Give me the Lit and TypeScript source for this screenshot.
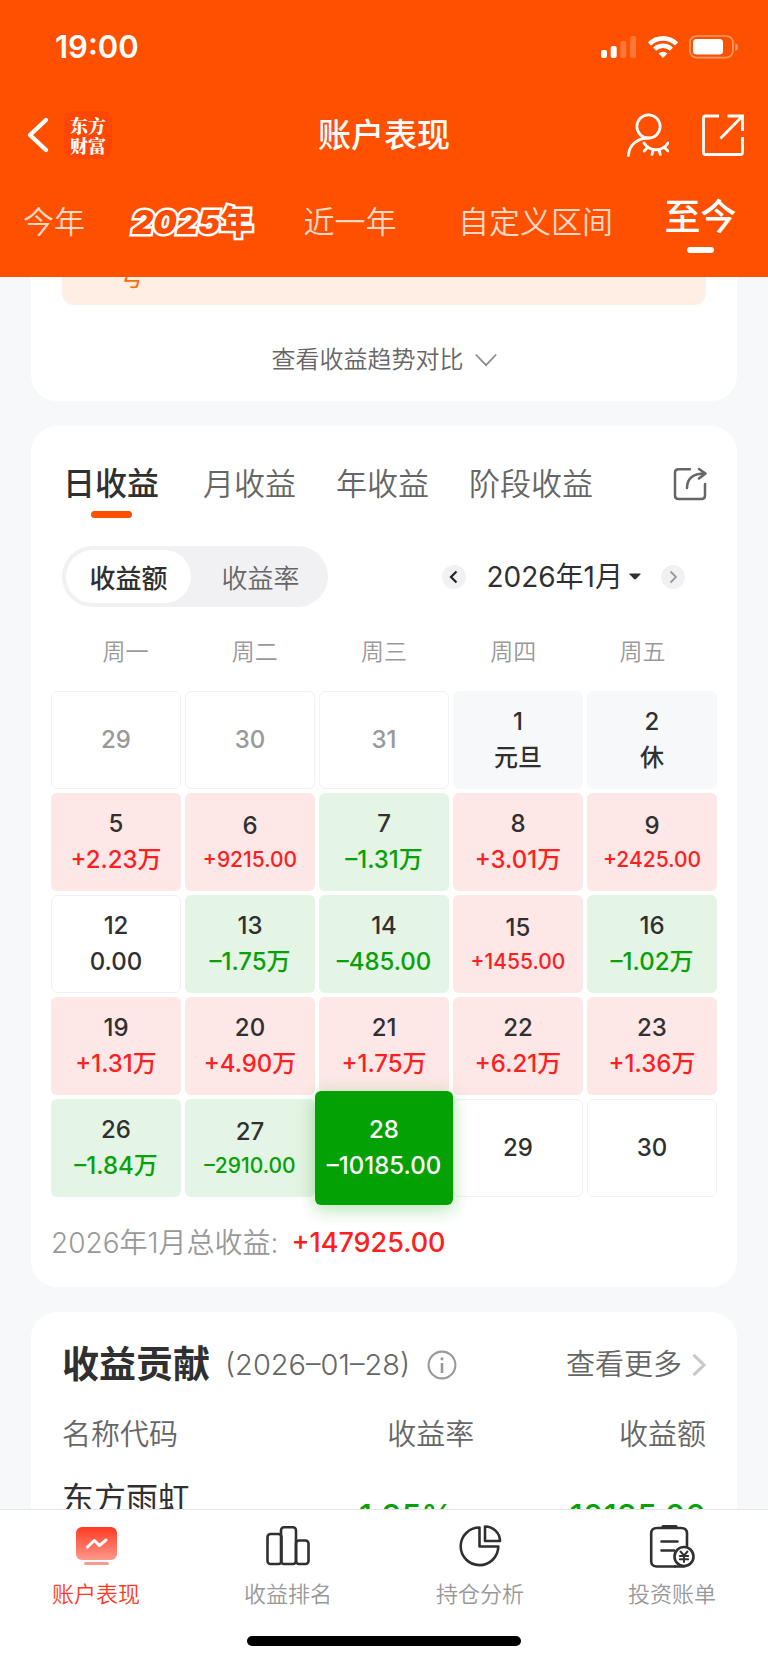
import { LitElement, html, css, svg, nothing } from "lit";
import { customElement, property, state } from "lit/decorators.js";
import { classMap } from "lit/directives/class-map.js";

type Tone = "up" | "down" | "flat" | "rest" | "outside";

interface Day {
  day: number;
  note?: string;
  tone: Tone;
  small?: boolean;
}

const DAYS: Day[] = [
  { day: 29, tone: "outside" },
  { day: 30, tone: "outside" },
  { day: 31, tone: "outside" },
  { day: 1, note: "元旦", tone: "rest" },
  { day: 2, note: "休", tone: "rest" },
  { day: 5, note: "+2.23万", tone: "up" },
  { day: 6, note: "+9215.00", tone: "up", small: true },
  { day: 7, note: "–1.31万", tone: "down" },
  { day: 8, note: "+3.01万", tone: "up" },
  { day: 9, note: "+2425.00", tone: "up", small: true },
  { day: 12, note: "0.00", tone: "flat" },
  { day: 13, note: "–1.75万", tone: "down" },
  { day: 14, note: "–485.00", tone: "down" },
  { day: 15, note: "+1455.00", tone: "up", small: true },
  { day: 16, note: "–1.02万", tone: "down" },
  { day: 19, note: "+1.31万", tone: "up" },
  { day: 20, note: "+4.90万", tone: "up" },
  { day: 21, note: "+1.75万", tone: "up" },
  { day: 22, note: "+6.21万", tone: "up" },
  { day: 23, note: "+1.36万", tone: "up" },
  { day: 26, note: "–1.84万", tone: "down" },
  { day: 27, note: "–2910.00", tone: "down", small: true },
  { day: 28, note: "–10185.00", tone: "down" },
  { day: 29, tone: "flat" },
  { day: 30, tone: "flat" },
];

const base = css`
  *,
  *::before,
  *::after {
    box-sizing: border-box;
  }
  button {
    margin: 0;
    padding: 0;
    border: 0;
    background: none;
    color: inherit;
    font: inherit;
    cursor: pointer;
  }
  a {
    color: inherit;
    text-decoration: none;
  }
  svg {
    display: block;
    flex: none;
  }
`;

@customElement("app-header")
export class AppHeader extends LitElement {
  static styles = [
    base,
    css`
      :host {
        display: block;
        flex: none;
        background: #ff5000;
        color: #fff;
      }
      .status {
        display: flex;
        align-items: center;
        height: 93px;
        padding: 0 29px 0 55px;
      }
      .time {
        flex: 1;
        font-size: 31px;
        font-weight: 600;
        line-height: 40px;
      }
      .signals {
        display: flex;
        align-items: center;
        gap: 11px;
      }
      .nav {
        display: grid;
        grid-template-columns: 1fr auto 1fr;
        align-items: center;
        height: 84px;
        padding: 0 24px;
      }
      .left,
      .right {
        display: flex;
        align-items: center;
      }
      .left {
        gap: 12px;
      }
      .right {
        justify-content: flex-end;
        gap: 33px;
      }
      .brand {
        display: grid;
        place-content: center;
        width: 48px;
        height: 48px;
        border-radius: 10px;
        background: #ff4703;
        font-family: "Noto Serif CJK SC", "Noto Sans CJK SC", sans-serif;
        font-size: 18px;
        font-weight: 900;
        line-height: 20px;
      }
      h1 {
        margin: 0;
        font-size: 33px;
        font-weight: 500;
        line-height: 44px;
      }
      .ranges {
        display: grid;
        grid-template-columns: 108fr 169fr 146fr 225fr 105fr;
        align-items: start;
        justify-items: center;
        padding: 18px 15px 24px 0;
      }
      .range {
        margin-top: 5px;
        font-size: 31px;
        font-weight: 350;
        line-height: 44px;
        color: #ffd8c6;
        white-space: nowrap;
      }
      .range.fancy {
        font-size: 33px;
        font-weight: 900;
        color: #ff4c00;
        -webkit-text-stroke: 5px #fff;
        paint-order: stroke fill;
        stroke-linejoin: round;
      }
      .fancy .digits {
        font-style: italic;
      }
      .range.active {
        display: flex;
        flex-direction: column;
        align-items: center;
        gap: 8px;
        margin-top: 0;
        font-size: 36px;
        font-weight: 500;
        color: #fff;
      }
      .range.active::after {
        content: "";
        width: 27px;
        height: 6px;
        border-radius: 3px;
        background: #fff;
      }
    `,
  ];

  render() {
    return html`
      <div class="status">
        <span class="time">19:00</span>
        <div class="signals">
          <svg width="36" height="24" viewBox="0 0 36 24" fill="#fff">
            <rect x="0" y="15" width="6" height="8" rx="2" />
            <rect x="9.7" y="11" width="6" height="12" rx="2" />
            <g opacity="0.22">
              <rect x="19.3" y="6" width="6" height="17" rx="2" />
              <rect x="29" y="1" width="6" height="22" rx="2" />
            </g>
          </svg>
          <svg width="30" height="24" viewBox="0 0 30 24" fill="none" stroke="#fff">
            <path d="M1.4 9a19.2 19.2 0 0 1 27.2 0" stroke-width="4.6" />
            <path d="M6.6 14.2a11.8 11.8 0 0 1 16.8 0" stroke-width="4.4" />
            <path d="M15 23l-4.4-4.5a6.2 6.2 0 0 1 8.8 0z" fill="#fff" stroke="none" />
          </svg>
          <svg width="50" height="24" viewBox="0 0 50 24">
            <rect x="0.9" y="1" width="43" height="21.6" rx="6.5" fill="none" stroke="#fff" stroke-opacity="0.42" stroke-width="1.7" />
            <rect x="4" y="4" width="30" height="15.6" rx="3.5" fill="#fff" />
            <path d="M46.4 8v8c3.4-1.3 3.4-6.700 0-8z" fill="#fff" opacity="0.45" />
          </svg>
        </div>
      </div>
      <div class="nav">
        <div class="left">
          <button aria-label="返回">
            <svg width="28" height="40" viewBox="0 0 28 40" fill="none" stroke="#fff" stroke-width="4.4" stroke-linecap="round" stroke-linejoin="round">
              <path d="M22 5L6 20l16 15" />
            </svg>
          </button>
          <span class="brand"><span>东方<br />财富</span></span>
        </div>
        <h1>账户表现</h1>
        <div class="right">
          <button aria-label="隐私">
            <svg width="44" height="44" viewBox="0 0 44 44" fill="none" stroke="#fff" stroke-width="2.8" stroke-linecap="round">
              <circle cx="23.5" cy="13.500" r="11.6" />
              <path d="M23.500 25C12.500 25 4 32 3.500 42.500" />
              <path d="M19 30c5.500 9 18.500 9 24 0M23 34l-3.800 4M28.200 36.300L27 41.500M34 36.300l1.200 5.200M39 34l4 4" />
            </svg>
          </button>
          <button aria-label="分享">
            <svg width="42" height="42" viewBox="0 0 42 42" fill="none" stroke="#fff" stroke-width="2.8">
              <path d="M17 2H3.500Q1.500 2 1.500 4v34.500q0 2 2 2h35q2 0 2-2V23" />
              <path d="M25.500 2h15v15M40 2.500L18.500 24.500" />
            </svg>
          </button>
        </div>
      </div>
      <nav class="ranges">
        <button class="range">今年</button>
        <button class="range fancy"><span class="digits">2025</span>年</button>
        <button class="range">近一年</button>
        <button class="range">自定义区间</button>
        <button class="range active" aria-current="true">至今</button>
      </nav>
    `;
  }
}

@customElement("day-cell")
export class DayCell extends LitElement {
  @property({ attribute: false }) data!: Day;
  @property({ type: Boolean, reflect: true }) selected = false;

  static styles = [
    base,
    css`
      :host {
        display: block;
        height: 98px;
        min-width: 0;
      }
      :host([selected]) {
        position: relative;
        z-index: 1;
        height: 114px;
        margin: -8px -4px;
      }
      .cell {
        display: flex;
        flex-direction: column;
        align-items: center;
        justify-content: center;
        width: 100%;
        height: 100%;
        border-radius: 6px;
        font-size: 24px;
        font-weight: 500;
        line-height: 36px;
        color: #303030;
        white-space: nowrap;
      }
      .flat,
      .outside {
        border: 1px solid #f1f1f3;
      }
      .outside {
        color: #999;
      }
      .rest {
        background: #f6f8fa;
      }
      .up {
        background: #fee7e7;
      }
      .down {
        background: #e4f4e5;
      }
      .up .note {
        color: #fc2020;
      }
      .down .note {
        color: #06a106;
      }
      .small {
        font-size: 21px;
        line-height: 32px;
      }
      :host([selected]) .cell {
        background: #03a103;
        box-shadow: 0 4px 18px rgba(3, 161, 3, 0.32);
        color: #fff;
      }
      :host([selected]) .note {
        color: #fff;
      }
    `,
  ];

  render() {
    const { day, note, tone, small } = this.data;
    return html`
      <button class="cell ${tone}" aria-pressed=${this.selected ? "true" : "false"}>
        <span>${day}</span>
        ${note ? html`<span class=${classMap({ note: true, small: !!small })}>${note}</span>` : nothing}
      </button>
    `;
  }
}

@customElement("profit-calendar")
export class ProfitCalendar extends LitElement {
  @state() private selected = 22;

  static styles = [
    base,
    css`
      :host {
        display: block;
        padding: 36px 20px 24px;
        border-radius: 26px;
        background: #fff;
      }
      .tabs {
        display: flex;
        align-items: flex-start;
        gap: 40px;
        padding: 0 10px 0 12px;
      }
      .tab {
        font-size: 31px;
        line-height: 44px;
        font-weight: 350;
        color: #666;
        white-space: nowrap;
      }
      .tab.active {
        display: flex;
        flex-direction: column;
        align-items: center;
        gap: 5px;
        margin-right: 4px;
        font-size: 32px;
        font-weight: 500;
        color: #303030;
      }
      .tab.active::after {
        content: "";
        width: 41px;
        height: 7px;
        border-radius: 4px;
        background: #ff5000;
      }
      .share {
        margin: 5px 0 0 auto;
      }
      .controls {
        display: flex;
        align-items: center;
        justify-content: space-between;
        margin-top: 28px;
        padding: 0 32px 0 11px;
      }
      .segmented {
        display: grid;
        grid-template-columns: 1fr 1fr;
        width: 266px;
        height: 61px;
        padding: 4px;
        border-radius: 31px;
        background: #f1f1f4;
      }
      .segment {
        border-radius: 27px;
        font-size: 26px;
        font-weight: 350;
        color: #666;
      }
      .segment.first {
        margin-right: 4px;
      }
      .segment.last {
        margin-left: 2px;
      }
      .segment.on {
        background: #fff;
        font-weight: 500;
        color: #303030;
      }
      .month {
        display: flex;
        align-items: center;
        gap: 20px;
      }
      .step {
        display: grid;
        place-items: center;
        width: 24px;
        height: 24px;
        border-radius: 12px;
        background: #f1f1f4;
      }
      .pick {
        display: flex;
        align-items: center;
        gap: 6px;
        font-size: 28px;
        font-weight: 400;
        line-height: 40px;
        color: #303030;
      }
      .week {
        display: grid;
        grid-template-columns: repeat(5, 1fr);
        margin-top: 29px;
        padding: 0 10px;
        text-align: center;
        font-size: 23px;
        font-weight: 350;
        line-height: 32px;
        color: #999;
      }
      .days {
        display: grid;
        grid-template-columns: repeat(5, 1fr);
        gap: 4px;
        margin-top: 23px;
      }
      .total {
        display: flex;
        gap: 13px;
        margin: 26px 0 0;
        font-size: 28px;
        font-weight: 350;
        line-height: 40px;
        color: #999;
      }
      .sum {
        font-size: 27px;
        font-weight: 500;
        color: #fc2020;
      }
    `,
  ];

  render() {
    return html`
      <div class="tabs">
        <button class="tab active">日收益</button>
        <button class="tab">月收益</button>
        <button class="tab">年收益</button>
        <button class="tab">阶段收益</button>
        <button class="share" aria-label="分享收益">
          <svg width="34" height="34" viewBox="0 0 34 34" fill="none" stroke="#666" stroke-width="2.500" stroke-linecap="round" stroke-linejoin="round">
            <path d="M17 2.200H5.500Q2 2.200 2 5.500V28.500Q2 32 5.500 32h23q3.500 0 3.500-3.500V17" />
            <path d="M14 21C14 12 19.500 6.500 32 6.500M26 2l6.500 4.500L26 11.500" />
          </svg>
        </button>
      </div>
      <div class="controls">
        <div class="segmented">
          <button class="segment first on" aria-pressed="true">收益额</button>
          <button class="segment last" aria-pressed="false">收益率</button>
        </div>
        <div class="month">
          <button class="step" aria-label="上个月">
            <svg width="10" height="14" viewBox="0 0 10 14" fill="none" stroke="#222" stroke-width="2.200"><path d="M7.500 1.500L2 7l5.500 5.500" /></svg>
          </button>
          <button class="pick">
            2026年1月
            <svg width="12" height="7" viewBox="0 0 12 7" fill="#303030"><path d="M.8.5h10.400q.800 0 .3.700L7 6q-1 .8-2 0L.5 1.200Q0 .5.800.5z" /></svg>
          </button>
          <button class="step" aria-label="下个月">
            <svg width="10" height="14" viewBox="0 0 10 14" fill="none" stroke="#999" stroke-width="1.800"><path d="M2.500 1.500L8 7l-5.500 5.500" /></svg>
          </button>
        </div>
      </div>
      <div class="week">
        ${["周一", "周二", "周三", "周四", "周五"].map((d) => html`<span>${d}</span>`)}
      </div>
      <div class="days">
        ${DAYS.map(
          (d, i) => html`<day-cell
            .data=${d}
            ?selected=${i === this.selected}
            @click=${() => (this.selected = i)}
          ></day-cell>`
        )}
      </div>
      <p class="total"><span>2026年1月总收益:</span><span class="sum">+147925.00</span></p>
    `;
  }
}

@customElement("profit-contribution")
export class ProfitContribution extends LitElement {
  static styles = [
    base,
    css`
      :host {
        display: block;
        padding: 31px 31px 40px;
        border-radius: 26px;
        background: #fff;
      }
      .head {
        display: flex;
        align-items: center;
        height: 44px;
        color: #666;
        font-size: 29px;
        font-weight: 350;
        line-height: 44px;
      }
      h2 {
        margin: 0;
        font-size: 37px;
        font-weight: 700;
        color: #303030;
      }
      .date {
        margin: 0 17px 0 15px;
      }
      .more {
        display: flex;
        align-items: center;
        gap: 10px;
        margin-left: auto;
      }
      table {
        width: 100%;
        margin-top: 28px;
        border-collapse: collapse;
        table-layout: fixed;
      }
      th,
      td {
        padding: 0;
        text-align: right;
      }
      th {
        font-size: 29px;
        font-weight: 350;
        line-height: 40px;
        color: #666;
      }
      .name {
        width: 35%;
        text-align: left;
      }
      .rate {
        width: 29%;
      }
      td {
        padding-top: 28px;
        font-size: 32px;
        font-weight: 500;
        line-height: 40px;
        color: #06a106;
      }
      td.name {
        padding: 24px 0 32px;
        font-size: 32px;
        font-weight: 400;
        color: #303030;
      }
      td.rate {
        padding-right: 21px;
      }
    `,
  ];

  render() {
    return html`
      <div class="head">
        <h2>收益贡献</h2>
        <span class="date">(2026–01–28)</span>
        <button aria-label="说明">
          <svg width="30" height="30" viewBox="0 0 30 30" fill="none" stroke="#999" stroke-width="2.100">
            <circle cx="15" cy="15" r="13.400" />
            <path d="M15 13v10" stroke-width="2.600" />
            <circle cx="15" cy="8.800" r="1.600" fill="#999" stroke="none" />
          </svg>
        </button>
        <a class="more" href="#">
          查看更多
          <svg width="14" height="24" viewBox="0 0 14 24" fill="none" stroke="#c8c8c8" stroke-width="3"><path d="M1.500 1.800L12 12 1.500 22.200" /></svg>
        </a>
      </div>
      <table>
        <thead>
          <tr>
            <th class="name">名称代码</th>
            <th class="rate">收益率</th>
            <th>收益额</th>
          </tr>
        </thead>
        <tbody>
          <tr>
            <td class="name">东方雨虹</td>
            <td class="rate">–1.95%</td>
            <td>–10185.00</td>
          </tr>
        </tbody>
      </table>
    `;
  }
}

const dark = "#303030";

const ICONS = [
  svg`<defs><linearGradient id="g" x1="0" y1="0" x2="0" y2="1"><stop offset="0" stop-color="#ff3a22" /><stop offset="1" stop-color="#ff998c" /></linearGradient></defs>
    <rect x="2" y="3" width="41" height="33" rx="6" fill="url(#g)" />
    <rect x="10" y="38" width="25" height="3" rx="1.500" fill="#ff998c" />
    <path d="M13.500 23L20.300 16.500l5 5L32 16" fill="none" stroke="#fff" stroke-width="3" stroke-linecap="round" stroke-linejoin="round" />`,
  svg`<g fill="none" stroke=${dark} stroke-width="2.600">
    <rect x="1.500" y="10" width="14" height="30" rx="3" />
    <rect x="15" y="3.300" width="15" height="36.700" rx="3" />
    <rect x="30" y="16.500" width="12.500" height="23.500" rx="3" /></g>`,
  svg`<g fill="none" stroke=${dark} stroke-width="2.600" stroke-linejoin="round">
    <path d="M21.500 3.500A18.800 18.800 0 1 0 40.300 22.500H21.500z" />
    <path d="M27 2.500V17H42A14.800 14.800 0 0 0 27 2.500z" /></g>`,
  svg`<g fill="none" stroke=${dark} stroke-width="2.600" stroke-linecap="round">
    <path d="M25 42.500H7Q1.200 42.500 1.200 37V9.500Q1.200 4 7 4H31Q37 4 37 9.500V22" />
    <path d="M13 2.800H26" stroke-width="3.400" />
    <path d="M11.500 17.500H27.500M11.500 26.500H24" />
    <path d="M25 42.500H34" />
    <circle cx="34" cy="32.500" r="9.500" fill="#fff" />
    <path d="M30.500 27.500l3.500 4 3.500-4M34 31.500v6.500M29.800 32h8.400M29.800 35.200h8.400" stroke-width="1.900" /></g>`,
];

@customElement("app-tabbar")
export class AppTabbar extends LitElement {
  static styles = [
    base,
    css`
      :host {
        display: block;
        flex: none;
        padding: 14px 0 17px;
        border-top: 1px solid #e6e6e8;
        background: #fff;
      }
      .tabs {
        display: grid;
        grid-template-columns: repeat(4, 1fr);
      }
      .tab {
        display: flex;
        flex-direction: column;
        align-items: center;
        gap: 8px;
        font-size: 22px;
        font-weight: 350;
        line-height: 36px;
        color: #999;
      }
      .tab.active {
        color: #ff3a22;
      }
      .home {
        width: 274px;
        height: 10px;
        margin: 24px auto 0;
        border-radius: 5px;
        background: #000;
      }
    `,
  ];

  render() {
    return html`
      <nav class="tabs">
        ${["账户表现", "收益排名", "持仓分析", "投资账单"].map(
          (label, i) => html`<a href="#" class=${classMap({ tab: true, active: i === 0 })}>
            <svg width="44" height="44" viewBox="0 0 44 44" overflow="visible">${ICONS[i]}</svg>
            ${label}
          </a>`
        )}
      </nav>
      <div class="home"></div>
    `;
  }
}

@customElement("app-root")
export class AppRoot extends LitElement {
  static styles = [
    base,
    css`
      :host {
        display: flex;
        flex-direction: column;
        height: 100vh;
        background: #f6f8fa;
        font-family: Inter, "Noto Sans CJK SC", sans-serif;
      }
      main {
        display: flex;
        flex: 1;
        flex-direction: column;
        gap: 25px;
        min-height: 0;
        padding: 0 31px;
        overflow-x: hidden;
        overflow-y: auto;
        scrollbar-width: none;
      }
      main > * {
        flex: none;
      }
      .trend {
        padding: 0 31px 21px;
        border-radius: 0 0 26px 26px;
        background: #fff;
      }
      .notice {
        margin: -16px 0 0;
        padding: 0 57px 12px;
        border-radius: 0 0 12px 12px;
        background: #feeee4;
        font-size: 25px;
        font-weight: 400;
        line-height: 32px;
        color: #ff6a0a;
      }
      .compare {
        display: flex;
        align-items: center;
        justify-content: center;
        gap: 11px;
        width: 100%;
        margin-top: 35px;
        font-size: 24px;
        font-weight: 350;
        line-height: 40px;
        color: #666;
      }
    `,
  ];

  render() {
    return html`
      <app-header></app-header>
      <main>
        <section class="trend">
          <p class="notice">号</p>
          <button class="compare">
            查看收益趋势对比
            <svg width="22" height="14" viewBox="0 0 22 14" fill="none" stroke="#8c8c8c" stroke-width="1.800"><path d="M.800 1.500L11 12.200 21.200 1.500" /></svg>
          </button>
        </section>
        <profit-calendar></profit-calendar>
        <profit-contribution></profit-contribution>
      </main>
      <app-tabbar></app-tabbar>
    `;
  }
}
